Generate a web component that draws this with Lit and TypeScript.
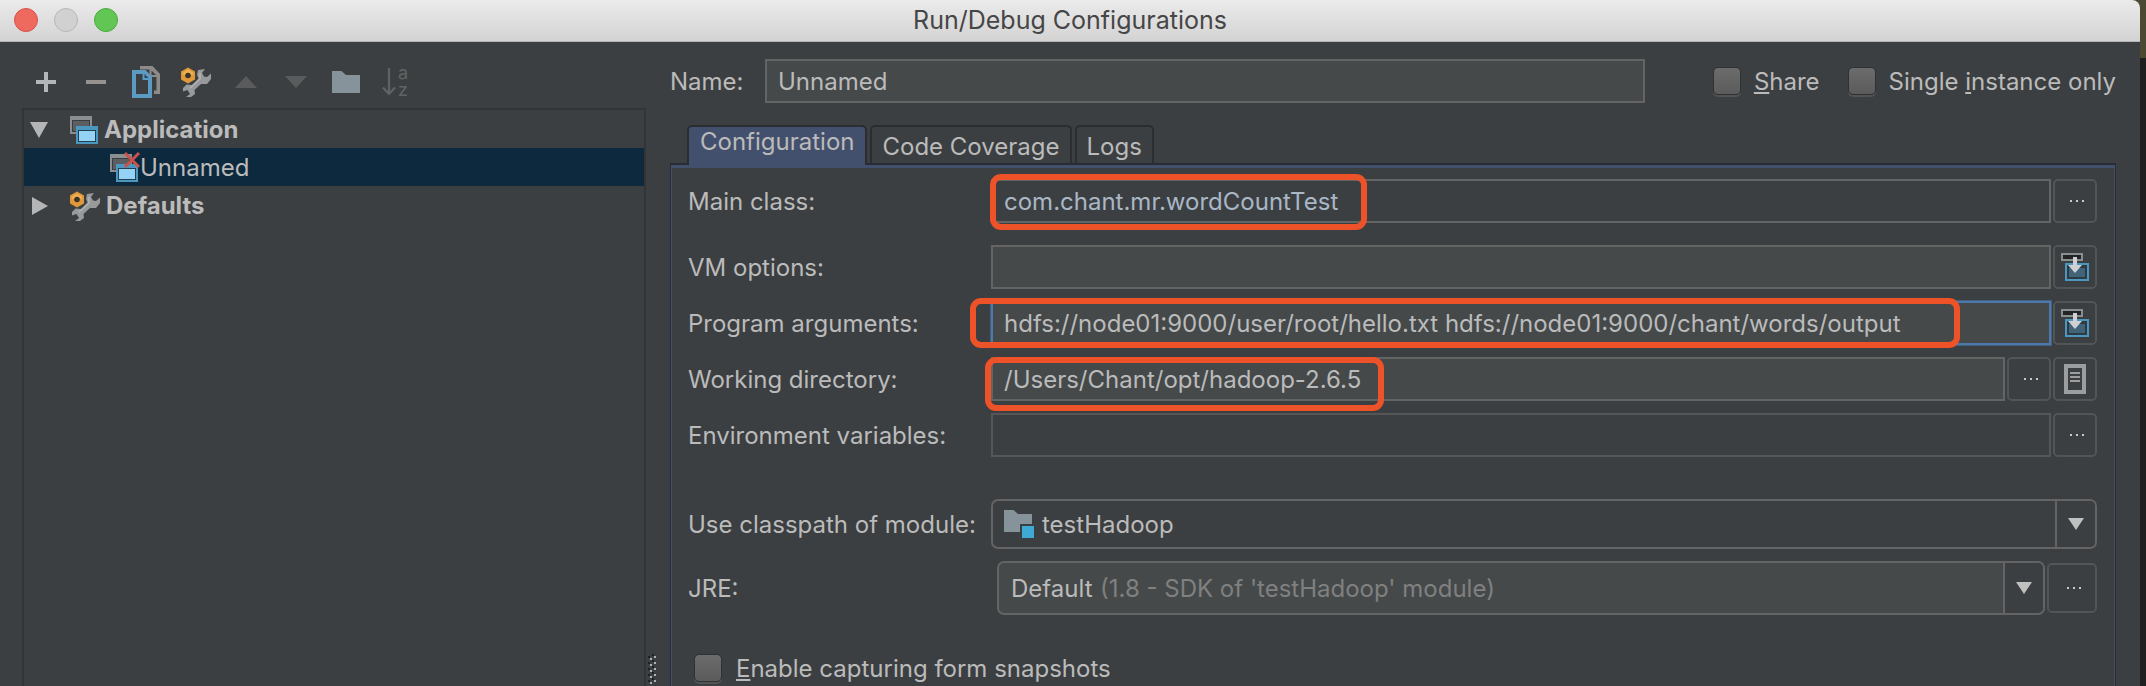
import { LitElement, html, svg, css, nothing } from "lit";
import { customElement, property } from "lit/decorators.js";
import { classMap } from "lit/directives/class-map.js";

const wrench = svg`
  <path d="M17 3 24 2 21 6 23 9.500 26 10 30 6.500V12L26 17H20L13.500 23 14 27 10 30H5L9 27 6.500 23 2 24.500V21L5.500 17.500 11 18 17.500 11.500 16 8Z" fill="#97999b"/>
  <path d="M19 6 19 12 9 21" fill="none" stroke="#b2b4b5" stroke-width="1.500"/>
  <path d="M7 .5 14 4.500V12.500L7 16.500 0 12.500V4.500Z" fill="#e0983a"/>
  <path d="M7 2.500 12 5.500V8H2V5.500Z" fill="#efb052"/>
  <circle cx="7" cy="8.500" r="2.800" fill="#3a3327"/>`;

const appIcon = svg`
  <path d="M0 0H22V18H0Z" fill="#8b8d8e"/>
  <path d="M2 4H20V16H2Z" fill="#3a3d3f"/>
  <path d="M3 5H19V15H3Z" fill="#5b5f61"/>
  <path d="M6 10H28V28H6Z" fill="#4b97bf"/>
  <path d="M8 14H26V26H8Z" fill="#23404f"/>
  <path d="M9 15H25V25H9Z" fill="#95d3f6"/>`;

const ICONS = {
  plus: { w: 20, h: 20, body: svg`<path d="M8 0H12V8H20V12H12V20H8V12H0V8H8Z" fill="#b4b5b6"/>` },
  minus: { w: 20, h: 4, body: svg`<path d="M0 0H20V4H0Z" fill="#96928f"/>` },
  copy: {
    w: 28, h: 32,
    body: svg`
      <path d="M8 0H20.500L28 8V28H22V24.500H24.500V11H17.500V3.500H8Z" fill="#8d8b8a"/>
      <path d="M19.500 4.500V9H24Z" fill="#3c3f41"/>
      <path fill-rule="evenodd" d="M0 4H13.500L20 10.500V32H0ZM4 8V28H16V14H10.500V8Z" fill="#5b9ac2"/>
      <path d="M12.500 8V12H16.500Z" fill="#2f4656"/>`,
  },
  wrench: { w: 30, h: 30, body: wrench },
  up: { w: 22, h: 12, body: svg`<path d="M11 0 22 12H0Z" fill="#5a5b5c"/>` },
  down: { w: 22, h: 12, body: svg`<path d="M0 0H22L11 12Z" fill="#5a5b5c"/>` },
  folder: { w: 28, h: 22, body: svg`<path d="M0 0H9.500L14 4H28V22H0Z" fill="#87939a"/>` },
  sort: {
    w: 28, h: 30,
    body: svg`
      <path d="M7 1V27M1 20.500 7 27 13 20.500" fill="none" stroke="#606365" stroke-width="2.200"/>
      <text x="16" y="12" class="glyph">a</text><text x="16" y="29" class="glyph">z</text>`,
  },
  open: { w: 18, h: 16, body: svg`<path d="M0 0H18L9 16Z" fill="#b4b5b6"/>` },
  closed: { w: 18, h: 18, body: svg`<path d="M2 0 18 9 2 18Z" fill="#b4b5b6"/>` },
  app: { w: 28, h: 28, body: appIcon },
  appBroken: {
    w: 28, h: 28,
    body: svg`${appIcon}<path d="M15 -1 29 13M29 -1 15 13" fill="none" stroke="#c9524c" stroke-width="3"/>`,
  },
  dots: { w: 18, h: 6, body: svg`<path d="M4 2H6V4H4ZM10 2H12V4H10ZM16 2H18V4H16Z" fill="#c8c8c8"/>` },
  expand: {
    w: 28, h: 28,
    body: svg`
      <path d="M1 1H21V7H1Z" fill="#222425" stroke="#8b8d8e" stroke-width="2"/>
      <path d="M5 11H27V27H5Z" fill="#2e3b43" stroke="#4b97bf" stroke-width="2"/>
      <path d="M8 15H24V24H8Z" fill="#41647a"/>
      <path d="M12 4H16V12H21L14 20 7 12H12Z" fill="#d0d1d2"/>`,
  },
  doc: {
    w: 22, h: 30,
    body: svg`<path d="M2 2H20V28H2Z" fill="none" stroke="#9b9d9e" stroke-width="4"/>
      <path d="M6 8H16V10H6ZM6 12H16V14H6ZM6 16H16V18H6Z" fill="#9b9d9e"/>`,
  },
  module: {
    w: 30, h: 28,
    body: svg`<path d="M0 0H9.500L14 4H28V14H16V22H0Z" fill="#87939a"/><path d="M18 16H30V28H18Z" fill="#40a8d4"/>`,
  },
  arrow: { w: 16, h: 12, body: svg`<path d="M0 0H16L8 12Z" fill="#bfc0c0"/>` },
};

type IconName = keyof typeof ICONS;

@customElement("ide-icon")
class IdeIcon extends LitElement {
  static styles = css`
    :host { display: block; flex: none; }
    svg { display: block; overflow: visible; }
    .glyph { font: 18px Inter, sans-serif; fill: #606365; }
  `;
  @property() name: IconName = "plus";
  render() {
    const { w, h, body } = ICONS[this.name];
    return html`<svg width=${w} height=${h} viewBox="0 0 ${w} ${h}" aria-hidden="true">${body}</svg>`;
  }
}

interface Field {
  id: string;
  label: string;
  value: string;
  kind?: "plain" | "focused" | "disabled";
  mark?: string;
  actions: { icon: IconName; title: string }[];
}

const TOOLS: { icon: IconName; title: string; off?: boolean }[] = [
  { icon: "plus", title: "Add" },
  { icon: "minus", title: "Remove" },
  { icon: "copy", title: "Copy" },
  { icon: "wrench", title: "Edit defaults" },
  { icon: "up", title: "Move up", off: true },
  { icon: "down", title: "Move down", off: true },
  { icon: "folder", title: "New folder" },
  { icon: "sort", title: "Sort", off: true },
];

const FIELDS: Field[] = [
  { id: "main", label: "Main class:", value: "com.chant.mr.wordCountTest", kind: "plain", mark: "mark-main", actions: [{ icon: "dots", title: "Browse" }] },
  { id: "vm", label: "VM options:", value: "", actions: [{ icon: "expand", title: "Expand" }] },
  { id: "args", label: "Program arguments:", value: "hdfs://node01:9000/user/root/hello.txt hdfs://node01:9000/chant/words/output", kind: "focused", mark: "mark-args", actions: [{ icon: "expand", title: "Expand" }] },
  { id: "dir", label: "Working directory:", value: "/Users/Chant/opt/hadoop-2.6.5", mark: "mark-dir", actions: [{ icon: "dots", title: "Browse" }, { icon: "doc", title: "Insert macro" }] },
  { id: "env", label: "Environment variables:", value: "", kind: "disabled", actions: [{ icon: "dots", title: "Edit" }] },
];

@customElement("app-root")
class AppRoot extends LitElement {
  static styles = css`
    :host {
      display: block;
      min-height: 100vh;
      box-sizing: border-box;
      padding-right: 6px;
      background: linear-gradient(#4b4932 58px, #1f1f1f 58px);
      color: #bbbbbb;
      font: 24px/30px Inter, "Liberation Sans", sans-serif;
    }
    * { box-sizing: border-box; }
    input, button, select { font: inherit; color: inherit; margin: 0; border-radius: 0; outline: none; }
    button { padding: 0; border: 0; background: none; }

    .window { min-height: 100vh; display: flex; flex-direction: column; background: #3c3f41; border-radius: 0 8px 0 0; }
    .titlebar {
      display: grid; grid-template-columns: 1fr auto 1fr; align-items: center;
      height: 42px; padding: 0 14px 1px;
      background: linear-gradient(#ebebeb, #d3d3d3); border-bottom: 1px solid #b3b3b3;
      border-radius: 0 8px 0 0;
    }
    .lights { display: flex; gap: 16px; }
    .light { width: 24px; height: 24px; border-radius: 50%; border: 1px solid; }
    .close { background: #ee6a5f; border-color: #d5544a; }
    .minimize { background: #d1d1d1; border-color: #b6b6b6; }
    .zoom { background: #61c654; border-color: #4daa41; }
    .title { margin: 0; font-size: 25px; font-weight: 400; color: #464646; }

    .body { flex: 1; display: grid; grid-template-columns: 624px 24px minmax(0, 1fr); padding: 0 24px 0 22px; }
    .side { display: flex; flex-direction: column; }
    .toolbar { display: flex; gap: 2px; padding-top: 14px; }
    .tool { width: 48px; height: 52px; display: grid; place-items: center; }
    .tree { flex: 1; margin: 0; padding: 0; list-style: none; border: 2px solid #323435; border-bottom: 0; }
    .node { display: flex; align-items: center; height: 38px; padding: 1px 0 0 6px; gap: 6px; font-weight: 700; }
    .twisty { width: 34px; display: flex; }
    .leaf { padding-left: 86px; gap: 2px; font-weight: 400; background: #0d293e; }

    .splitter { display: flex; flex-direction: column; justify-content: flex-end; padding: 0 2px 14px; }
    .grip { display: block; }

    .namebar { display: flex; align-items: center; padding-top: 17px; }
    .name-label { width: 95px; }
    .name-label, .check span, .row > label { padding-top: 2px; }
    .input {
      height: 44px; width: 100%; min-width: 0; padding: 1px 11px 0;
      border: 2px solid #646464; background: #45494a;
    }
    .name-input { flex: 1; margin-right: 68px; }
    .check { display: flex; align-items: center; gap: 13px; white-space: nowrap; }
    .check + .check { margin-left: 28px; }
    .box {
      appearance: none; flex: none; width: 28px; height: 28px; border-radius: 5px;
      border: 1px solid #2f3132; background: linear-gradient(#6c6c6c, #5b5b5b);
      box-shadow: 0 2px 0 #515354;
    }

    .tabs { display: flex; gap: 3px; padding: 22px 17px 0; }
    .tab {
      height: 38px; padding: 2px 10px 0; border: 2px solid #2b2d30; border-bottom: 0;
      border-radius: 5px 5px 0 0; line-height: 36px;
    }
    .tab.on { position: relative; height: 40px; margin-bottom: -2px; padding: 0 11px 8px; line-height: 30px; background: #43506d; }
    .pane {
      flex: 1; padding: 14px 18px 14px 17px; border: 1px solid #2a2c33; border-width: 2px 1px 0;
      box-shadow: inset 0 3px #43506d, inset 1px 0 #43506d, inset -1px 0 #43506d;
    }
    .main { display: flex; flex-direction: column; }
    .row { display: grid; grid-template-columns: 303px minmax(0, 1fr); align-items: center; margin-bottom: 12px; white-space: nowrap; }
    .row.main-row { margin-bottom: 22px; }
    .row.env-row { margin-bottom: 42px; }
    .cell { position: relative; display: flex; align-items: center; gap: 2px; }
    .plain { background: transparent; color: #a9b7c6; }
    .disabled { background: transparent; border-color: #565656; }
    .focused { border-color: #4d78ab; box-shadow: 0 0 0 1px #43607f; }
    .action { flex: none; width: 44px; height: 44px; border: 2px solid #525557; border-radius: 5px; display: grid; place-items: center; }

    .mark { position: absolute; border: 6px solid #ee5228; border-radius: 11px; pointer-events: none; }
    .mark-main { left: -1px; top: -5px; width: 377px; height: 56px; }
    .mark-args { left: -21px; top: -3px; width: 990px; height: 50px; }
    .mark-dir { left: -6px; top: 0; width: 399px; height: 54px; }

    .combo { flex: 1; display: grid; align-items: center; height: 50px; border: 2px solid #646464; border-radius: 7px; overflow: hidden; }
    .combo > * { grid-area: 1 / 1; }
    .select { appearance: none; width: 100%; height: 100%; border: 0; padding: 2px 50px 0 12px; background: transparent; }
    .select.with-icon { padding-left: 49px; }
    .combo-icon { margin-left: 11px; pointer-events: none; }
    .drop { justify-self: end; width: 40px; height: 100%; border-left: 2px solid #646464; background: #3c3f41; display: grid; place-items: center; pointer-events: none; }
    .jre { margin-left: 6px; height: 54px; background: #45494a; }
    .hint { margin-left: 101px; padding-top: 2px; color: #808080; pointer-events: none; }
    .wide { width: 50px; height: 50px; }
    .snap { padding: 25px 6px 0; gap: 14px; }
  `;

  private renderField(f: Field) {
    const kind = f.kind ?? "";
    return html`
      <div class=${classMap({ row: true, "main-row": f.id === "main", "env-row": f.id === "env" })}>
        <label for=${f.id}>${f.label}</label>
        <div class="cell">
          <input id=${f.id} class="input ${kind}" type="text" .value=${f.value} ?disabled=${kind === "disabled"} spellcheck="false" />
          ${f.actions.map((a) => html`<button class="action" aria-label=${a.title}><ide-icon name=${a.icon}></ide-icon></button>`)}
          ${f.mark ? html`<span class="mark ${f.mark}"></span>` : nothing}
        </div>
      </div>`;
  }

  render() {
    return html`
      <div class="window">
        <header class="titlebar">
          <div class="lights">
            <button class="light close" aria-label="Close"></button>
            <button class="light minimize" aria-label="Minimize"></button>
            <button class="light zoom" aria-label="Zoom"></button>
          </div>
          <h1 class="title">Run/Debug Configurations</h1>
        </header>
        <div class="body">
          <nav class="side">
            <div class="toolbar">
              ${TOOLS.map((t) => html`<button class="tool" aria-label=${t.title} ?disabled=${t.off}><ide-icon name=${t.icon}></ide-icon></button>`)}
            </div>
            <ul class="tree">
              <li class="node"><span class="twisty"><ide-icon name="open"></ide-icon></span><ide-icon name="app"></ide-icon>Application</li>
              <li class="node leaf"><ide-icon name="appBroken"></ide-icon>Unnamed</li>
              <li class="node"><span class="twisty"><ide-icon name="closed"></ide-icon></span><ide-icon name="wrench"></ide-icon>Defaults</li>
            </ul>
          </nav>
          <div class="splitter">
            <svg class="grip" width="8" height="30" viewBox="0 0 8 30" aria-hidden="true">
              ${[2, 8, 14, 20, 26].map((y) => svg`
                <path d="M0 ${y}h2v2h-2ZM4 ${y - 2}h2v2h-2Z" fill="#1e2021"/>
                <path d="M2 ${y + 2}h2v2h-2ZM6 ${y}h2v2h-2Z" fill="#b0b0b0"/>`)}
            </svg>
          </div>
          <main class="main">
            <div class="namebar">
              <label class="name-label" for="name">Name:</label>
              <input id="name" class="input name-input" type="text" .value=${"Unnamed"} spellcheck="false" />
              <label class="check"><input class="box" type="checkbox" /><span><u>S</u>hare</span></label>
              <label class="check"><input class="box" type="checkbox" /><span>Single <u>i</u>nstance only</span></label>
            </div>
            <div class="tabs" role="tablist">
              <button class="tab on" role="tab" aria-selected="true">Configuration</button>
              <button class="tab" role="tab" aria-selected="false">Code Coverage</button>
              <button class="tab" role="tab" aria-selected="false">Logs</button>
            </div>
            <section class="pane">
              ${FIELDS.map((f) => this.renderField(f))}
              <div class="row">
                <label for="module">Use classpath of module:</label>
                <div class="cell">
                  <div class="combo">
                    <select id="module" class="select with-icon"><option>testHadoop</option></select>
                    <ide-icon class="combo-icon" name="module"></ide-icon>
                    <span class="drop"><ide-icon name="arrow"></ide-icon></span>
                  </div>
                </div>
              </div>
              <div class="row">
                <label for="jre">JRE:</label>
                <div class="cell">
                  <div class="combo jre">
                    <select id="jre" class="select"><option>Default</option></select>
                    <span class="hint">(1.8 - SDK of 'testHadoop' module)</span>
                    <span class="drop"><ide-icon name="arrow"></ide-icon></span>
                  </div>
                  <button class="action wide" aria-label="Browse"><ide-icon name="dots"></ide-icon></button>
                </div>
              </div>
              <label class="check snap"><input class="box" type="checkbox" /><span><u>E</u>nable capturing form snapshots</span></label>
            </section>
          </main>
        </div>
      </div>`;
  }
}
